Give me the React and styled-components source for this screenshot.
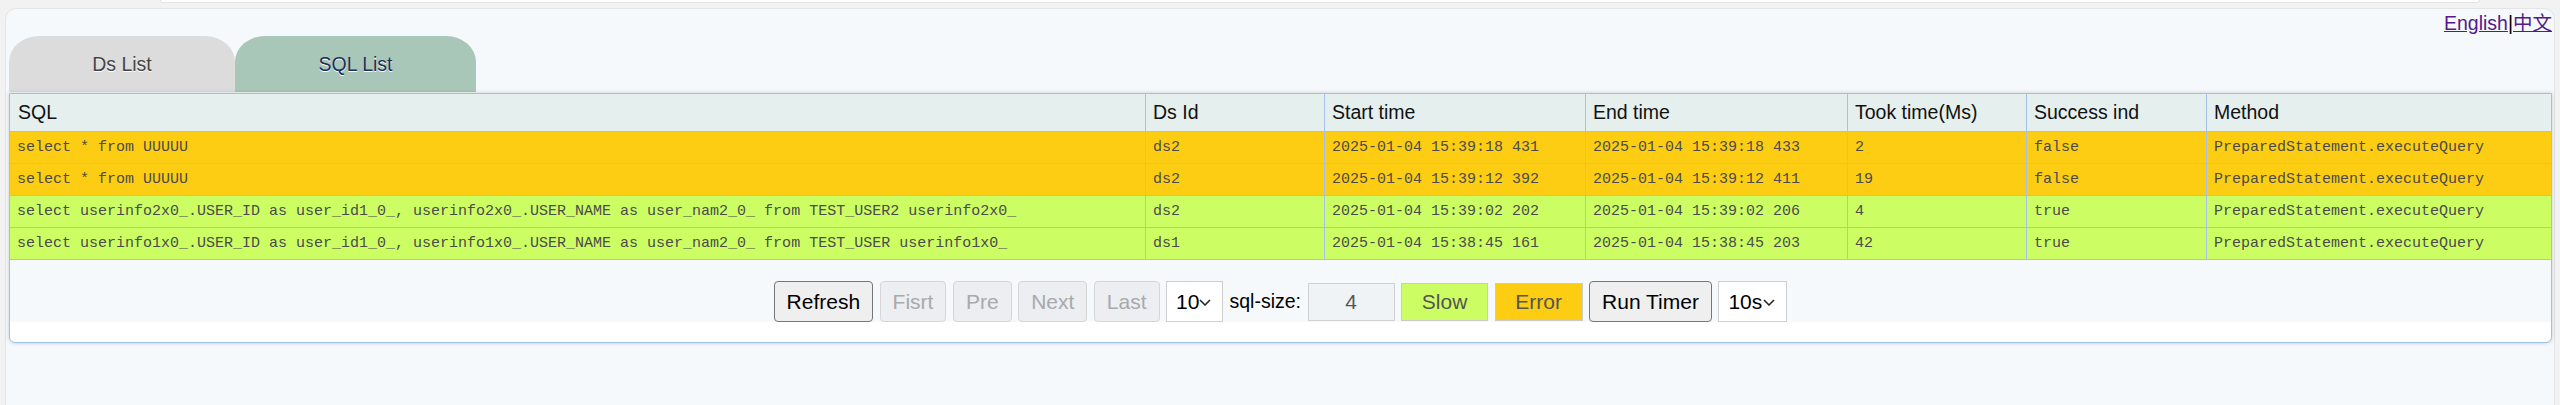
import React from 'react'
import styled, { createGlobalStyle } from 'styled-components'

const GlobalStyle = createGlobalStyle`
    body {
        margin: 0;
        background-color: #f2f2f2;
        font-family: "Liberation Sans", Arial, sans-serif;
    }
`

const cols = '1135px 179px 261px 262px 179px 180px 1fr'
const line = '#a6c2ea'

const TopStrip = styled.div`
    height: 3px;
    box-sizing: border-box;
    margin: 0 80px 0 160px;
    background-color: #ffffff;
    border: 1px solid #e4e4e4;
    border-top: none;
    border-radius: 0 0 8px 8px;
`

const Card = styled.div`
    margin: 5px 5px 0 5px;
    min-height: 420px;
    padding: 0 2px 0 3px;
    background-color: #f5f9fc;
    border: 1px solid #e4e4e4;
    border-radius: 11px;
`

const LangBar = styled.div`
    height: 27px;
    box-sizing: border-box;
    padding-top: 2px;
    text-align: right;
    font-size: 19.5px;
    line-height: 25px;
    font-family: "Liberation Sans", "Noto Sans CJK SC", sans-serif;
`

const LangLink = styled.a`
    color: #551a8b;
    text-decoration: underline;
`

const Sep = styled.span`
    color: #000;
`

const TabRow = styled.div`
    display: flex;
    height: 56px;
`

const Tab = styled.div`
    width: ${props => props.$w}px;
    display: flex;
    align-items: center;
    justify-content: center;
    border-radius: 30px 30px 0 0 / 26px 26px 0 0;
    background-color: ${props => props.$active ? '#a9c7b8' : '#dcdcdc'};
    color: ${props => props.$active ? '#1b2f5e' : '#444444'};
    font-size: 19.5px;
    text-shadow: 0 1px 0 #ffffff;
`

const Panel = styled.div`
    position: relative;
    margin-top: 1px;
    padding-bottom: 20px;
    background-color: #ffffff;
    border: 1px solid #9fc0ea;
    border-radius: 0 0 6px 6px;
    box-shadow: 0 0 4px rgba(0, 0, 0, 0.18);
`

const TableArea = styled.div`
    background-color: #f5f9fc;
`

const Row = styled.div`
    display: grid;
    grid-template-columns: ${cols};
    height: ${props => props.$head ? 38 : 32}px;
    box-sizing: border-box;
    border-bottom: 1px solid ${line};
    background-color: ${props => props.$head ? '#e5efed' : props.$tone === 'err' ? '#fdcd14' : '#ccfe63'};
    font-family: ${props => props.$head ? '"Liberation Sans", Arial, sans-serif' : '"Liberation Mono", "Courier New", monospace'};
    font-size: ${props => props.$head ? '19.5px' : '15px'};
    color: ${props => props.$head ? '#111111' : '#4b4b4b'};
`

const Cell = styled.div`
    display: flex;
    align-items: center;
    padding-left: 7px;
    border-left: 1px solid ${line};
    white-space: nowrap;
    overflow: hidden;

    &:first-child {
        border-left: none;
        padding-left: ${props => props.$head ? 8 : 7}px;
    }
`

const Pager = styled.div`
    display: flex;
    justify-content: center;
    align-items: center;
    gap: 6.5px;
    padding-top: 21px;
    height: 41px;
`

const Button = styled.button`
    height: 41px;
    padding: 0 12px;
    font-family: "Liberation Sans", Arial, sans-serif;
    font-size: 21px;
    color: #000000;
    background-color: #efefef;
    border: 1px solid #767676;
    border-radius: 4px;

    &:disabled {
        color: #a8a9ab;
        background-color: #eceef1;
        border-color: #d3d5d8;
    }
`

const Swatch = styled.button`
    width: ${props => props.$w}px;
    height: 38px;
    padding: 0;
    font-family: "Liberation Sans", Arial, sans-serif;
    font-size: 21px;
    color: #555555;
    background-color: ${props => props.$tone === 'err' ? '#fdcd14' : '#ccfe63'};
    border: 1px solid #c9cbcc;
    border-radius: 0;
`

const SizeInput = styled.input`
    width: 87px;
    height: 38px;
    box-sizing: border-box;
    padding: 0;
    text-align: center;
    font-family: "Liberation Sans", Arial, sans-serif;
    font-size: 21px;
    color: #555555;
    background-color: #f0f3f5;
    border: 1px solid #cfd2d4;
`

const Label = styled.span`
    font-size: 19.5px;
    color: #000000;
`

const SelectWrap = styled.div`
    position: relative;
    width: ${props => props.$w}px;
    height: 41px;
`

const Select = styled.select`
    appearance: none;
    width: 100%;
    height: 100%;
    padding: 0 0 0 9px;
    font-family: "Liberation Sans", Arial, sans-serif;
    font-size: 21px;
    color: #000000;
    background-color: #ffffff;
    border: 1px solid #cfcfcf;
    border-radius: 0;
`

const Chevron = styled.svg`
    position: absolute;
    right: 12px;
    top: 18px;
    pointer-events: none;
`

const rows = [
    ['select * from UUUUU', 'ds2', '2025-01-04 15:39:18 431', '2025-01-04 15:39:18 433', '2', 'false', 'err'],
    ['select * from UUUUU', 'ds2', '2025-01-04 15:39:12 392', '2025-01-04 15:39:12 411', '19', 'false', 'err'],
    ['select userinfo2x0_.USER_ID as user_id1_0_, userinfo2x0_.USER_NAME as user_nam2_0_ from TEST_USER2 userinfo2x0_', 'ds2', '2025-01-04 15:39:02 202', '2025-01-04 15:39:02 206', '4', 'true', 'ok'],
    ['select userinfo1x0_.USER_ID as user_id1_0_, userinfo1x0_.USER_NAME as user_nam2_0_ from TEST_USER userinfo1x0_', 'ds1', '2025-01-04 15:38:45 161', '2025-01-04 15:38:45 203', '42', 'true', 'ok'],
]

const heads = ['SQL', 'Ds Id', 'Start time', 'End time', 'Took time(Ms)', 'Success ind', 'Method']

const DropDown = ({ value, w }) => (
    <SelectWrap $w={w}>
        <Select defaultValue={value}>
            <option>{value}</option>
        </Select>
        <Chevron width="12" height="7" viewBox="0 0 12 7">
            <polyline points="1,1 6,6 11,1" fill="none" stroke="#222" strokeWidth="1.5" />
        </Chevron>
    </SelectWrap>
)

const App = () => {
    return (
        <>
            <GlobalStyle />
            <TopStrip />
            <Card>
                <LangBar>
                    <LangLink href="#">English</LangLink>
                    <Sep>|</Sep>
                    <LangLink href="#">中文</LangLink>
                </LangBar>
                <TabRow>
                    <Tab $w={226}>Ds List</Tab>
                    <Tab $w={241} $active>SQL List</Tab>
                </TabRow>
                <Panel>
                    <TableArea>
                        <Row $head>
                            {heads.map(h => <Cell key={h} $head>{h}</Cell>)}
                        </Row>
                        {rows.map((r, i) => (
                            <Row key={i} $tone={r[6]}>
                                {r.slice(0, 6).map((v, j) => <Cell key={j}>{v}</Cell>)}
                                <Cell>PreparedStatement.executeQuery</Cell>
                            </Row>
                        ))}
                        <Pager>
                            <Button>Refresh</Button>
                            <Button disabled>Fisrt</Button>
                            <Button disabled>Pre</Button>
                            <Button disabled>Next</Button>
                            <Button disabled>Last</Button>
                            <DropDown value="10" w={57} />
                            <Label>sql-size:</Label>
                            <SizeInput defaultValue="4" />
                            <Swatch $w={87}>Slow</Swatch>
                            <Swatch $w={88} $tone="err">Error</Swatch>
                            <Button>Run Timer</Button>
                            <DropDown value="10s" w={69} />
                        </Pager>
                    </TableArea>
                </Panel>
            </Card>
        </>
    )
}

export default App
